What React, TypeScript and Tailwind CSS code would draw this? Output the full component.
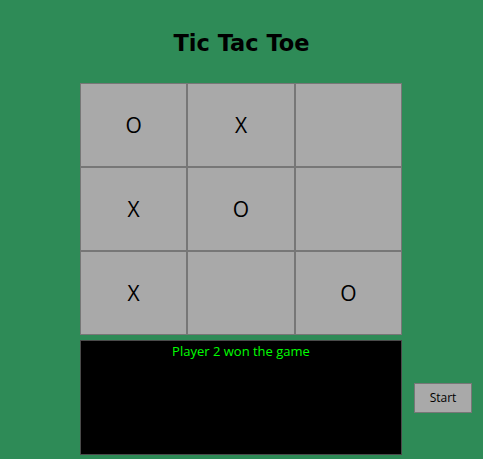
import React from 'react';

const board: string[] = ['O', 'X', '', 'X', 'O', '', 'X', '', 'O'];

const App: React.FC = () => {
  return (
    <div className="w-[483px] h-[459px] bg-[#2e8b57] overflow-hidden">
      <h1
        className="pt-[30px] h-[83px] text-center text-[22.5px] font-bold text-black leading-[26px]"
        style={{ fontFamily: '"DejaVu Sans", Verdana, sans-serif' }}
      >
        Tic Tac Toe
      </h1>

      {/* board */}
      <div className="ml-[80px] w-[322px] h-[252px] grid grid-cols-3 grid-rows-3">
        {board.map((cell, i) => (
          <div
            key={i}
            className="flex items-center justify-center pt-[2px] bg-[#a9a9a9] border border-[#777777] text-[21px] text-black"
            style={{ fontFamily: '"Open Sans", "Noto Sans", sans-serif' }}
          >
            {cell}
          </div>
        ))}
      </div>

      <div className="flex items-center gap-[12px] pl-[80px] mt-[5px]">
        <div className="w-[322px] h-[115px] bg-black border border-[#4a4a4a] shrink-0">
          <p
            className="pt-[2px] text-center text-[13px] leading-[17px] text-[#00ff00]"
            style={{ fontFamily: '"Open Sans", "Noto Sans", sans-serif' }}
          >
            Player 2 won the game
          </p>
        </div>
        <button
          className="w-[58px] h-[30px] shrink-0 bg-[#a9a9a9] border border-[#777777] text-[12px] text-black"
          style={{ fontFamily: '"Open Sans", "Noto Sans", sans-serif' }}
        >
          Start
        </button>
      </div>
    </div>
  );
};

export default App;
